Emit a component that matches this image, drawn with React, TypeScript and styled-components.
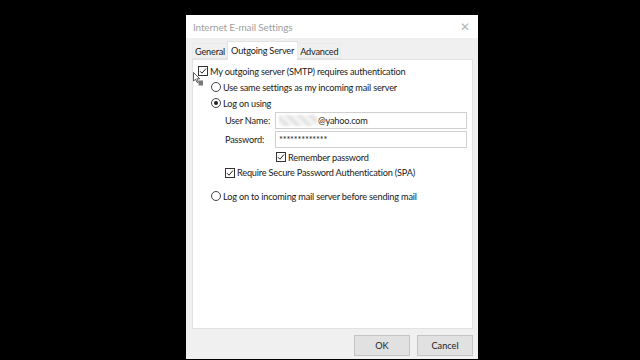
import React from "react";
import styled, { createGlobalStyle } from "styled-components";

const Global = createGlobalStyle`
  html, body { margin: 0; padding: 0; background: #000; }
  body { width: 640px; height: 360px; overflow: hidden; font-family: Lato, "Open Sans", sans-serif; }
`;

const Stage = styled.div`
  width: 640px;
  height: 360px;
  background: #000;
  padding: 15px 0 0 186px;
  box-sizing: border-box;
`;

const Dialog = styled.div`
  position: relative;
  width: 292px;
  height: 344px;
  background: #f0f0f0;
  display: flex;
  flex-direction: column;
  box-sizing: border-box;
`;

const TitleBar = styled.div`
  height: 23px;
  background: #fff;
  display: flex;
  align-items: center;
  justify-content: space-between;
  padding: 0 8px 0 7px;
  font-size: 10px;
  letter-spacing: -0.15px;
  color: #a0a0a0;
`;

const Close = styled.span`
  font-size: 12px;
  color: #b5b5b5;
  font-weight: 300;
`;

const Body = styled.div`
  flex: 1;
  display: flex;
  flex-direction: column;
  padding: 0 5px 0 6px;
`;

const TabRow = styled.div`
  display: flex;
  align-items: flex-end;
  height: 21px;
  position: relative;
  z-index: 1;
`;

const Tab = styled.div<{ $active?: boolean }>`
  font-size: 9.2px;
  letter-spacing: -0.2px;
  color: #1a1a1a;
  padding: 0 ${(p) => (p.$active ? "3px" : "2px")};
  height: ${(p) => (p.$active ? "19px" : "16px")};
  line-height: ${(p) => (p.$active ? "18px" : "15px")};
  background: ${(p) => (p.$active ? "#fff" : "#f0f0f0")};
  border: 1px solid ${(p) => (p.$active ? "#e2e2e2" : "#ebebeb")};
  border-bottom: ${(p) => (p.$active ? "none" : "1px solid #e2e2e2")};
  margin-right: -1px;
  margin-bottom: ${(p) => (p.$active ? "-1px" : "0")};
  box-sizing: border-box;
  white-space: nowrap;
`;

const Panel = styled.div`
  height: 270px;
  background: #fff;
  border: 1px solid #e2e2e2;
  box-sizing: border-box;
  padding: 3px 5px 0 5px;
  display: flex;
  flex-direction: column;
`;

const Row = styled.div<{ $indent?: number; $h?: number; $mt?: number }>`
  display: flex;
  align-items: center;
  height: ${(p) => p.$h ?? 16}px;
  margin-left: ${(p) => p.$indent ?? 0}px;
  margin-top: ${(p) => p.$mt ?? 0}px;
  font-size: 9.2px;
  letter-spacing: -0.2px;
  color: #1a1a1a;
  white-space: nowrap;
`;

const Box = styled.span`
  width: 10px;
  height: 10px;
  border: 1px solid #333;
  box-sizing: border-box;
  display: inline-flex;
  align-items: center;
  justify-content: center;
  margin-right: 2px;
  flex: none;
  background: #fff;
`;

const Radio = styled.span<{ $on?: boolean }>`
  width: 10px;
  height: 10px;
  border: 1px solid #444;
  border-radius: 50%;
  box-sizing: border-box;
  display: inline-flex;
  align-items: center;
  justify-content: center;
  margin-right: 2px;
  flex: none;
  &::after {
    content: "";
    width: 4px;
    height: 4px;
    border-radius: 50%;
    background: ${(p) => (p.$on ? "#222" : "transparent")};
  }
`;

const Label = styled.span`
  width: 50px;
  flex: none;
`;

const Field = styled.div`
  width: 192px;
  height: 17px;
  border: 1px solid #d0d0d0;
  box-sizing: border-box;
  display: flex;
  align-items: center;
  padding-left: 3px;
  font-size: 9.2px;
  color: #222;
`;

const Redacted = styled.span`
  width: 38px;
  height: 11px;
  margin-right: 1px;
  background: repeating-linear-gradient(45deg, #f4f4f4 0 4px, #e4e4e4 4px 8px);
  filter: blur(1px);
`;

const Footer = styled.div`
  display: flex;
  justify-content: flex-end;
  gap: 7px;
  padding: 6px 0 0 0;
`;

const Button = styled.button`
  width: 56px;
  height: 21px;
  background: #e1e1e1;
  border: 1px solid #c4c4c4;
  font-family: inherit;
  font-size: 9.2px;
  color: #222;
  padding: 0;
`;

const Cursor = styled.svg`
  position: absolute;
  left: 7px;
  top: 57px;
`;

const Check = () => (
  <svg width="8" height="8" viewBox="0 0 8 8">
    <path d="M1 4.2 L3 6.2 L7 1.5" fill="none" stroke="#222" strokeWidth="1" />
  </svg>
);

export default function App() {
  return (
    <Stage>
      <Global />
      <Dialog>
        <TitleBar>
          <span>Internet E-mail Settings</span>
          <Close>✕</Close>
        </TitleBar>
        <Body>
          <TabRow>
            <Tab>General</Tab>
            <Tab $active>Outgoing Server</Tab>
            <Tab>Advanced</Tab>
          </TabRow>
          <Panel>
            <Row>
              <Box><Check /></Box>My outgoing server (SMTP) requires authentication
            </Row>
            <Row $indent={13}>
              <Radio />Use same settings as my incoming mail server
            </Row>
            <Row $indent={13}>
              <Radio $on />Log on using
            </Row>
            <Row $indent={27} $h={19}>
              <Label>User Name:</Label>
              <Field>
                <Redacted />@yahoo.com
              </Field>
            </Row>
            <Row $indent={27} $h={19}>
              <Label>Password:</Label>
              <Field>*************</Field>
            </Row>
            <Row $indent={78} $h={16}>
              <Box><Check /></Box>Remember password
            </Row>
            <Row $indent={27} $h={15}>
              <Box><Check /></Box>Require Secure Password Authentication (SPA)
            </Row>
            <Row $indent={13} $mt={8}>
              <Radio />Log on to incoming mail server before sending mail
            </Row>
          </Panel>
          <Footer>
            <Button>OK</Button>
            <Button>Cancel</Button>
          </Footer>
        </Body>
        <Cursor width="11" height="14" viewBox="0 0 11 14">
          <path d="M0.5 0.5 L0.5 9 L2.6 7.2 L4 10.5 L5.3 10 L4 6.8 L6.8 6.8 Z" fill="#fff" stroke="#333" strokeWidth="0.8" />
          <rect x="5.5" y="8.5" width="4.5" height="5" fill="#777" />
        </Cursor>
      </Dialog>
    </Stage>
  );
}
